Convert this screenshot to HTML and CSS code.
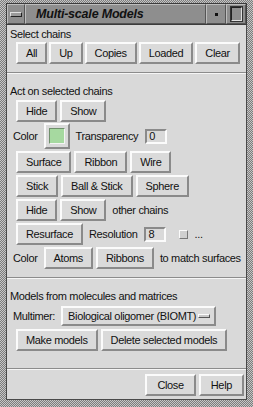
FILE: index.html
```html
<!DOCTYPE html>
<html lang="en">
<head>
    <meta charset="UTF-8">
    <title>Multi-scale Models</title>
    <link rel="stylesheet" href="styles.css">
</head>
<body>
<div class="frame">
  <div class="window">
    <div class="titlebar">
      <div class="tb-menu"><span class="tb-bar"></span></div>
      <div class="tb-title">Multi-scale Models</div>
      <div class="tb-min"><span class="tb-dot"></span></div>
      <div class="tb-max"><span class="tb-box"></span></div>
    </div>
    <div class="panel">
      <div class="heading first">Select chains</div>
      <div class="row row-top">
        <button class="btn">All</button>
        <button class="btn">Up</button>
        <button class="btn">Copies</button>
        <button class="btn">Loaded</button>
        <button class="btn">Clear</button>
      </div>

      <div class="sep"></div>

      <div class="heading">Act on selected chains</div>
      <div class="row">
        <button class="btn">Hide</button>
        <button class="btn">Show</button>
      </div>
      <div class="row labeled color-row">
        <span class="lbl">Color</span>
        <button class="swatch"><span class="swatch-fill"></span></button>
        <span class="lbl">Transparency</span>
        <span class="entry">0</span>
      </div>
      <div class="row">
        <button class="btn">Surface</button>
        <button class="btn">Ribbon</button>
        <button class="btn">Wire</button>
      </div>
      <div class="row">
        <button class="btn">Stick</button>
        <button class="btn">Ball &amp; Stick</button>
        <button class="btn">Sphere</button>
      </div>
      <div class="row">
        <button class="btn">Hide</button>
        <button class="btn">Show</button>
        <span class="lbl">other chains</span>
      </div>
      <div class="row">
        <button class="btn">Resurface</button>
        <span class="lbl">Resolution</span>
        <span class="entry">8</span>
        <span class="check"></span>
        <span class="lbl">...</span>
      </div>
      <div class="row labeled">
        <span class="lbl">Color</span>
        <button class="btn">Atoms</button>
        <button class="btn">Ribbons</button>
        <span class="lbl">to match surfaces</span>
      </div>

      <div class="sep"></div>

      <div class="heading">Models from molecules and matrices</div>
      <div class="row labeled multimer-row">
        <span class="lbl">Multimer:</span>
        <button class="option"><span class="option-text">Biological oligomer (BIOMT)</span><span class="option-ind"></span></button>
      </div>
      <div class="row make-row">
        <button class="btn">Make models</button>
        <button class="btn">Delete selected models</button>
      </div>

      <div class="sep bottom-sep"></div>

      <div class="row dialog-row">
        <button class="btn wide">Close</button>
        <button class="btn wide">Help</button>
      </div>
    </div>
  </div>
</div>
</body>
</html>
```

FILE: styles.css
```css
* {
    box-sizing: border-box;
}
body {
    margin: 0;
    font-family: "Liberation Sans", Arial, sans-serif;
    font-size: 11px;
    letter-spacing: -0.35px;
    color: #111;
}
.frame {
    width: 253px;
    height: 407px;
    padding: 3px 6px 7px 6px;
    background: repeating-conic-gradient(#7c7c7c 0 25%, #c6c6c6 0 50%) 0 0 / 2px 2px;
    display: flex;
}
.window {
    flex: 1;
    display: flex;
    flex-direction: column;
    border-left: 1px solid #4a4a4a;
    border-right: 1px solid #4a4a4a;
    border-bottom: 1px solid #4a4a4a;
}

/* title bar */
.titlebar {
    height: 22px;
    display: flex;
    background: #8e8e8e;
    border: 1px solid #3c3c3c;
    margin: 0 -1px;
}
.tb-menu, .tb-min, .tb-max {
    display: flex;
    align-items: center;
    justify-content: center;
    border: 1px solid;
    border-color: #bdbdbd #555 #555 #bdbdbd;
}
.tb-menu {
    width: 18px;
}
.tb-bar {
    width: 12px;
    height: 5px;
    border: 1px solid;
    border-color: #e0e0e0 #222 #222 #e0e0e0;
    background: #9a9a9a;
}
.tb-title {
    flex: 1;
    padding-left: 10px;
    font-size: 12.5px;
    font-weight: bold;
    font-style: italic;
    letter-spacing: -0.2px;
    line-height: 19px;
    border: 1px solid;
    border-color: #bdbdbd #555 #555 #bdbdbd;
}
.tb-min {
    width: 20px;
}
.tb-dot {
    width: 3px;
    height: 3px;
    background: #111;
}
.tb-max {
    width: 20px;
}
.tb-box {
    width: 11px;
    height: 14px;
    border: 1px solid;
    border-color: #222 #e0e0e0 #e0e0e0 #222;
    outline: 1px solid #333;
}

/* main panel */
.panel {
    flex: 1;
    background: #d9d9d9;
    display: flex;
    flex-direction: column;
}
.heading {
    height: 14px;
    line-height: 14px;
    padding-left: 3px;
    margin-top: 10px;
}
.heading.first {
    margin-top: 2px;
}
.sep {
    height: 2px;
    border-top: 1px solid #8c8c8c;
    border-bottom: 1px solid #f6f6f6;
    margin-top: 8px;
}
.row {
    display: flex;
    align-items: center;
    gap: 3px;
    padding-left: 9px;
    margin-top: 2px;
    height: 22px;
}
.row-top {
    gap: 2px;
    margin-top: 1px;
}
.row.labeled {
    padding-left: 3px;
}
.color-row {
    height: 26px;
    margin-top: 1px;
}
.lbl {
    margin: 0 3px;
    white-space: nowrap;
}
.btn {
    height: 22px;
    padding: 0 8px;
    background: #dadada;
    border: 2px solid;
    border-color: #fbfbfb #8a8a8a #8a8a8a #fbfbfb;
    font: inherit;
    letter-spacing: inherit;
    color: inherit;
    white-space: nowrap;
}
.btn.wide {
    padding: 0 10px;
}
.swatch {
    width: 26px;
    height: 26px;
    padding: 0;
    display: flex;
    align-items: center;
    justify-content: center;
    background: #dadada;
    border: 2px solid;
    border-color: #fbfbfb #8a8a8a #8a8a8a #fbfbfb;
}
.swatch-fill {
    width: 16px;
    height: 16px;
    background: #a6d9a0;
    border: 1px solid;
    border-color: #6f8f6c #f4f4f4 #f4f4f4 #6f8f6c;
}
.entry {
    width: 22px;
    height: 15px;
    line-height: 11px;
    padding-left: 2px;
    border: 2px solid;
    border-color: #8a8a8a #fbfbfb #fbfbfb #8a8a8a;
    background: #d9d9d9;
    margin-left: 1px;
}
.check {
    width: 9px;
    height: 9px;
    margin-left: 10px;
    border: 1px solid;
    border-color: #fbfbfb #777 #777 #fbfbfb;
    background: #cfcfcf;
}
.multimer-row {
    height: 20px;
    margin-top: 3px;
}
.option {
    width: 155px;
    height: 20px;
    display: flex;
    align-items: center;
    justify-content: space-between;
    padding: 0 4px 0 5px;
    background: #dadada;
    border: 2px solid;
    border-color: #fbfbfb #8a8a8a #8a8a8a #fbfbfb;
    font: inherit;
    letter-spacing: inherit;
    color: inherit;
}
.option-text {
    white-space: nowrap;
}
.option-ind {
    width: 12px;
    height: 4px;
    border: 1px solid;
    border-color: #fbfbfb #555 #555 #fbfbfb;
    background: #c8c8c8;
}
.make-row {
    margin-top: 3px;
}
.bottom-sep {
    margin-top: 17px;
}
.dialog-row {
    justify-content: flex-end;
    padding-right: 2px;
    margin-top: 4px;
}
```
